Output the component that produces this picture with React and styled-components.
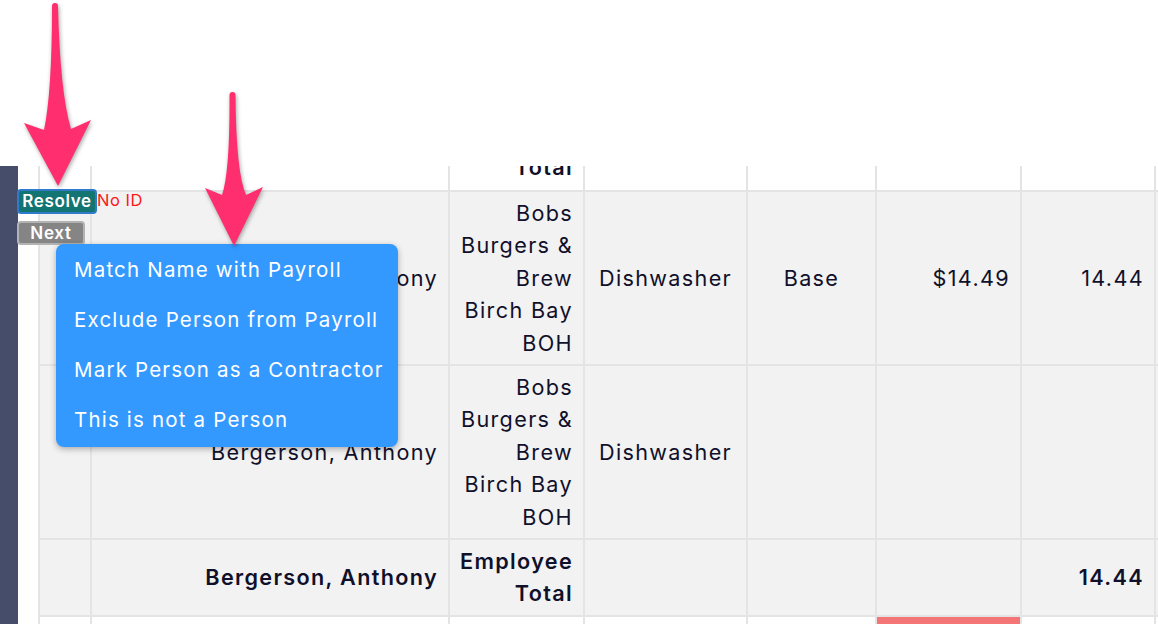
import React from 'react'
import styled, { createGlobalStyle } from 'styled-components'

const GlobalStyle = createGlobalStyle`
  html, body {
    margin: 0;
    padding: 0;
    background: #ffffff;
    overflow: hidden;
  }
  body {
    font-family: Inter, "Noto Sans", sans-serif;
    color: #10102a;
  }
`

const Page = styled.div`
  position: relative;
  width: 1158px;
  height: 624px;
  display: flex;
  flex-direction: column;
  overflow: hidden;
`
const TopSpace = styled.div`
  height: 166px;
  flex-shrink: 0;
`
const Stage = styled.div`
  position: relative;
  flex: 1;
  display: flex;
  min-height: 0;
`
const Sidebar = styled.div`
  width: 18px;
  flex-shrink: 0;
  background: #454d6b;
`
const Content = styled.div`
  flex: 1;
  padding-left: 20px;
  overflow: hidden;
`
const Table = styled.table`
  border-collapse: collapse;
  table-layout: fixed;
  width: 1216px;
  margin-top: -57px;
  font-size: 21.6px;
  line-height: 32.4px;
  letter-spacing: 0.062em;
`
const Row = styled.tr`
  background: ${(p) => (p.$shaded ? '#f2f2f2' : '#ffffff')};
`
const Cell = styled.td`
  border: 2px solid #e4e4e4;
  padding: 5px 10px;
  vertical-align: middle;
  text-align: ${(p) => p.$align || 'right'};
  font-weight: ${(p) => (p.$bold ? 600 : 400)};
  background: ${(p) => p.$bg || 'transparent'};
  height: ${(p) => p.$h || 'auto'};
  box-sizing: border-box;
`

const Actions = styled.div`
  position: absolute;
  left: 17px;
  top: 23px;
  display: flex;
  flex-direction: column;
  align-items: flex-start;
  gap: 7px;
`
const ActionRow = styled.div`
  display: flex;
  align-items: flex-start;
`
const SmallButton = styled.button`
  font-family: Inter, "Noto Sans", sans-serif;
  font-weight: 600;
  font-size: 17px;
  letter-spacing: 0.04em;
  color: #ffffff;
  line-height: 19px;
  padding: 0 2px;
  border-radius: 4px;
  cursor: pointer;
  background: ${(p) => (p.$variant === 'teal' ? '#127572' : '#858585')};
  border: 2px solid ${(p) => (p.$variant === 'teal' ? '#2f7bc9' : '#b3b3b3')};
  width: ${(p) => p.$w};
  height: ${(p) => p.$h};
`
const NoId = styled.span`
  color: #ff1616;
  font-size: 16.5px;
  letter-spacing: 0.03em;
  line-height: 18px;
  margin-top: 2px;
`
const Menu = styled.div`
  position: absolute;
  left: 56px;
  top: 78px;
  width: 342px;
  padding: 0 0 3px;
  background: #3399ff;
  border-radius: 8px;
  box-shadow: 0 2px 6px rgba(0, 0, 0, 0.3);
  display: flex;
  flex-direction: column;
`
const MenuItem = styled.div`
  height: 50px;
  display: flex;
  align-items: center;
  padding-left: 18px;
  color: #ffffff;
  font-size: 20.5px;
  letter-spacing: 0.058em;
  white-space: nowrap;
  cursor: pointer;
`
const Arrows = styled.svg`
  position: absolute;
  left: 0;
  top: 0;
  pointer-events: none;
  filter: drop-shadow(1px 2px 2px rgba(0, 0, 0, 0.35));
`

const colWidths = [52, 358, 135, 163, 129, 145, 134, 100]

const rows = [
  { shaded: false, h: '81px', cells: ['', '', 'Employee Total', '', '', '', '', ''], bold: true },
  {
    shaded: true,
    cells: ['', 'Bergerson, Anthony', 'Bobs Burgers & Brew Birch Bay BOH', 'Dishwasher', 'Base', '$14.49', '14.44', ''],
  },
  {
    shaded: true,
    cells: ['', 'Bergerson, Anthony', 'Bobs Burgers & Brew Birch Bay BOH', 'Dishwasher', '', '', '', ''],
  },
  { shaded: true, bold: true, cells: ['', 'Bergerson, Anthony', 'Employee Total', '', '', '', '14.44', ''] },
  { shaded: false, h: '60px', cells: ['', '', '', '', '', '', '', ''], red: 5 },
]

const alignFor = (i) => (i === 3 || i === 4 ? 'center' : 'right')

const menuItems = [
  'Match Name with Payroll',
  'Exclude Person from Payroll',
  'Mark Person as a Contractor',
  'This is not a Person',
]

export default function App() {
  return (
    <>
      <GlobalStyle />
      <Page>
        <TopSpace />
        <Stage>
          <Sidebar />
          <Content>
            <Table>
              <colgroup>
                {colWidths.map((w, i) => (
                  <col key={i} style={{ width: w }} />
                ))}
              </colgroup>
              <tbody>
                {rows.map((r, ri) => (
                  <Row key={ri} $shaded={r.shaded}>
                    {r.cells.map((c, ci) => (
                      <Cell
                        key={ci}
                        $align={alignFor(ci)}
                        $bold={r.bold}
                        $h={r.h}
                        $bg={r.red === ci ? '#f47575' : undefined}
                      >
                        {c}
                      </Cell>
                    ))}
                  </Row>
                ))}
              </tbody>
            </Table>
          </Content>
          <Actions>
            <ActionRow>
              <SmallButton $variant="teal" $w="80px" $h="25px">Resolve</SmallButton>
              <NoId>No ID</NoId>
            </ActionRow>
            <SmallButton $variant="gray" $w="68px" $h="24px">Next</SmallButton>
          </Actions>
          <Menu>
            {menuItems.map((m) => (
              <MenuItem key={m}>{m}</MenuItem>
            ))}
          </Menu>
        </Stage>
        <Arrows width="1158" height="624" viewBox="0 0 1158 624">
          <path
            d="M52 6 A3 3 0 0 1 58 6 Q60 92 71 129 L91 120 L58 186 L24 123 L44 130 Q52 92 52 6 Z"
            fill="#ff2e6f"
          />
          <path
            d="M229.5 95 A3 3 0 0 1 235.5 95 Q236 172 246 195 L263 187 L234 246 L205 188 L222 195 Q230 172 229.5 95 Z"
            fill="#ff2e6f"
          />
        </Arrows>
      </Page>
    </>
  )
}
